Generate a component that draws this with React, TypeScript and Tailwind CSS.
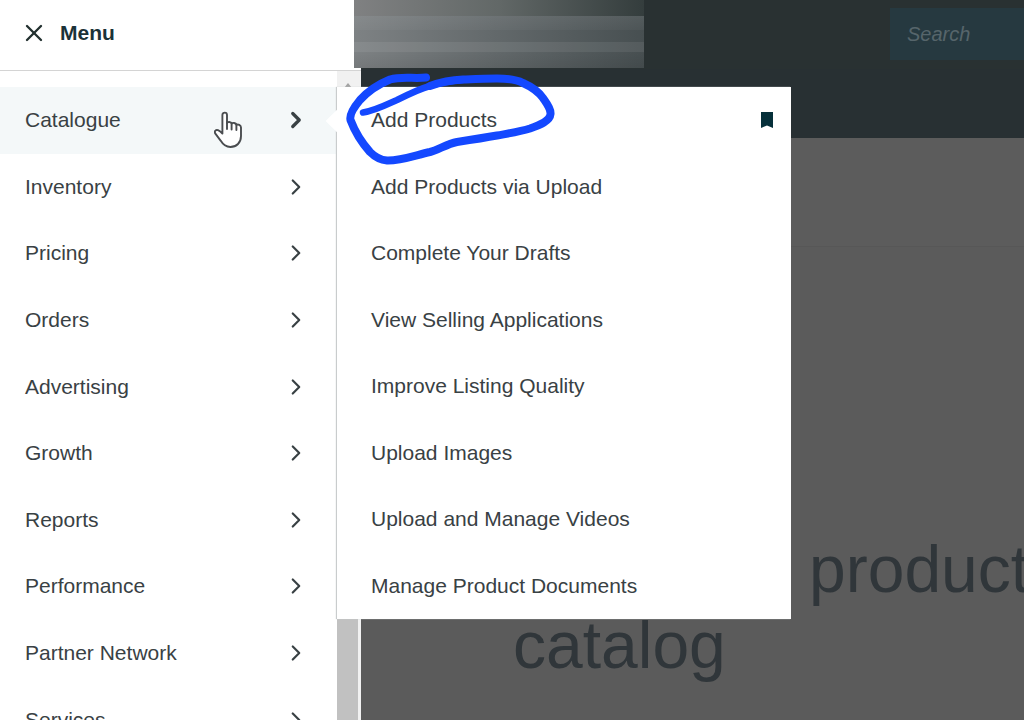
import { ChevronRight, X } from "lucide-react";

const MENU_ITEMS = [
  "Catalogue",
  "Inventory",
  "Pricing",
  "Orders",
  "Advertising",
  "Growth",
  "Reports",
  "Performance",
  "Partner Network",
  "Services",
];

const CATALOGUE_LINKS = [
  "Add Products",
  "Add Products via Upload",
  "Complete Your Drafts",
  "View Selling Applications",
  "Improve Listing Quality",
  "Upload Images",
  "Upload and Manage Videos",
  "Manage Product Documents",
];

function HandPointer() {
  return (
    <svg
      aria-hidden="true"
      viewBox="0 0 28 37"
      className="pointer-events-none absolute top-6 left-[214px] h-[37px] w-7"
    >
      <path
        d="M8.4 22.5V4C8.4 0.8 13 0.8 13 4V12C13.6 10.6 17 10.6 17.6 12.6C18.6 11.4 21.8 11.8 22.4 13.8C24 13 27 13.8 27 16.6V25C27 31.6 22.5 36 16.4 36C11.4 36 9 33.6 6.6 29.6L1.2 22.4C0 20 2 18.4 4 19.2C5.8 20 7.2 21.2 8.4 22.5Z"
        fill="#ffffff"
        stroke="#4a4d50"
        strokeWidth="1.9"
        strokeLinejoin="round"
      />
      <path
        d="M13 11.5V18M17.6 12.6V18.5M22.4 13.8V19"
        fill="none"
        stroke="#4a4d50"
        strokeWidth="1.9"
        strokeLinecap="round"
      />
    </svg>
  );
}

function Scrollbar() {
  return (
    <div aria-hidden="true" className="flex w-6 shrink-0 flex-col bg-[#f1f1f1] pr-[3px]">
      <div className="flex h-8 justify-center pt-3">
        <svg viewBox="0 0 8 5" className="h-[5px] w-2">
          <path d="M4 0L8 5H0Z" fill="#a3a3a3" />
        </svg>
      </div>
      <div className="flex-1 bg-[#c1c1c1]" />
    </div>
  );
}

function Flyout() {
  return (
    <div className="absolute top-[87px] left-[337px] z-10 h-[532px] w-[454px] bg-white shadow-[-1px_0_1px_#c9cccd]">
      <div className="absolute top-[26px] -left-2 h-4 w-4 rotate-45 bg-white" />
      <ul className="relative flex h-full flex-col">
        {CATALOGUE_LINKS.map((label, i) => (
          <li key={label} className="flex flex-1 items-center justify-between pr-4 pl-[34px]">
            <a href="#" className="text-[21px] leading-6">
              {label}
            </a>
            {i === 0 && (
              <button type="button" aria-label="Bookmark Add Products" className="w-[14px]">
                <svg viewBox="0 0 12 16" className="h-4 w-3">
                  <path d="M0 0H12V16L6 13.5L0 16Z" fill="#06303a" />
                </svg>
              </button>
            )}
          </li>
        ))}
      </ul>
    </div>
  );
}

function PenCircle() {
  return (
    <svg
      aria-hidden="true"
      viewBox="340 68 220 100"
      className="pointer-events-none absolute top-[68px] left-[340px] z-20 h-[100px] w-[220px]"
      fill="none"
      stroke="#1448ff"
      strokeLinecap="round"
      strokeLinejoin="round"
    >
      <path d="M363 112.5C374 111 386 105 397 100C409 94 419 89 430 86C441 82 452 81 463 80" strokeWidth="6.5" />
      <path
        d="M430 86C441 82 452 80 463 79.5C475 79 486 78.5 497 78.5C507 78.5 516 79.5 523 83C532 87 538 91 543 98C547 104 551 109 550.5 114C550 121 540 125 530 128.5C519 132 508 133.5 497 135.5C483 138 470 140 457 142C447 144 438 150 430 152C416 155 400 161 387 160.5C380 160 375 157 370 152C362 143 355 132 350.5 120C349 114 355 106 360 100C369 90 379 84 390 79.5C402 76 414 79 426 77.5"
        strokeWidth="8"
      />
    </svg>
  );
}

export default function App() {
  return (
    <div className="relative flex h-screen overflow-hidden bg-[#5b5b5b] font-['Liberation_Sans',Arial,sans-serif] text-[#394144]">
      <aside className="flex w-[361px] shrink-0 flex-col bg-white">
        <div className="flex h-[71px] shrink-0 items-center gap-3 border-b border-[#d4d4d4] pb-1 pl-5">
          <button type="button" aria-label="Close menu">
            <X size={28} strokeWidth={2} className="text-[#22302f]" />
          </button>
          <h2 className="text-[21px] leading-6 font-bold text-[#1b3238]">Menu</h2>
        </div>
        <div className="flex min-h-0 flex-1">
          <nav className="min-w-0 flex-1 overflow-hidden pt-4">
            <ul className="flex h-[666px] flex-col">
              {MENU_ITEMS.map((label, i) => (
                <li key={label} className={i === 0 ? "relative flex-1 bg-[#f4f8f9]" : "flex-1"}>
                  <button type="button" className="flex h-full w-full items-center justify-between pr-7 pl-[25px]">
                    <span className="text-[21px] leading-6">{label}</span>
                    <ChevronRight size={26} strokeWidth={i === 0 ? 3 : 2} />
                  </button>
                  {i === 0 && <HandPointer />}
                </li>
              ))}
            </ul>
          </nav>
          <Scrollbar />
        </div>
      </aside>

      <div className="flex min-w-0 flex-1 flex-col">
        <header className="h-[138px] shrink-0 bg-[#283033]">
          <div className="relative flex h-[69px] justify-end bg-[#293132]">
            <div className="absolute top-0 -left-[7px] h-[68px] w-[290px] bg-linear-to-r from-[#7e8284] to-[#474f51]">
              <div className="h-4 bg-linear-to-r from-[#808182] via-[#626867] to-[#343d3d]" />
              <div className="h-3.5 bg-linear-to-b from-white/7 to-white/3" />
              <div className="h-3" />
              <div className="h-2.5 bg-white/7" />
              <div className="h-4 bg-linear-to-b from-black/0 to-black/7" />
            </div>
            <input
              type="text"
              aria-label="Search"
              placeholder="Search"
              className="mt-2 h-[52px] w-[134px] bg-[#263940] pl-[17px] text-[20px] italic outline-none placeholder:text-[#56656b]"
            />
          </div>
        </header>
        <div className="h-[109px] shrink-0 border-b border-[#575757] bg-[#5c5c5c]" />
        <main className="flex-1 overflow-hidden pt-[284px]">
          <h1 className="text-[66px] leading-[76px] whitespace-nowrap text-[#30363a]">
            <span className="block pl-[448px]">product</span>
            <span className="block pl-[152px]">catalog</span>
          </h1>
        </main>
      </div>

      <Flyout />
      <PenCircle />
    </div>
  );
}
